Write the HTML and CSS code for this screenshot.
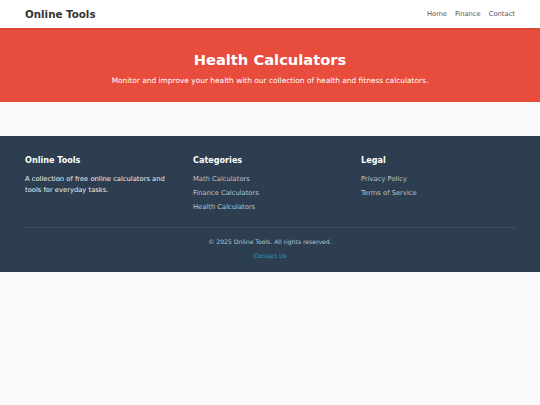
FILE: index.html
```html
<!DOCTYPE html>
<html lang="en">
<head>
<meta charset="utf-8">
<title>Health Calculators - Online Tools</title>
<link rel="stylesheet" href="styles.css">
</head>
<body>
<header class="site-header">
  <div class="container header-inner">
    <a class="logo" href="#">Online Tools</a>
    <nav class="main-nav">
      <a href="#">Home</a>
      <a href="#">Finance</a>
      <a href="#">Contact</a>
    </nav>
  </div>
</header>
<section class="hero">
  <h1>Health Calculators</h1>
  <p>Monitor and improve your health with our collection of health and fitness calculators.</p>
</section>
<main class="content"></main>
<footer class="site-footer">
  <div class="container">
    <div class="footer-grid">
      <div class="footer-col">
        <h3>Online Tools</h3>
        <p>A collection of free online calculators and tools for everyday tasks.</p>
      </div>
      <div class="footer-col">
        <h3>Categories</h3>
        <ul>
          <li><a href="#">Math Calculators</a></li>
          <li><a href="#">Finance Calculators</a></li>
          <li><a href="#">Health Calculators</a></li>
        </ul>
      </div>
      <div class="footer-col">
        <h3>Legal</h3>
        <ul>
          <li><a href="#">Privacy Policy</a></li>
          <li><a href="#">Terms of Service</a></li>
        </ul>
      </div>
    </div>
    <div class="footer-bottom">
      <p>&copy; 2025 Online Tools. All rights reserved.</p>
      <p><a href="#" class="contact-link">Contact Us</a></p>
    </div>
  </div>
</footer>
</body>
</html>
```
FILE: styles.css
```css
* { box-sizing: border-box; }
html, body { margin: 0; padding: 0; }
body {
  font-family: "DejaVu Sans", Verdana, sans-serif;
  font-size: 6.75px;
  line-height: 1.6;
  color: #333;
  background: #f8f9fa;
}
a { text-decoration: none; color: inherit; }
.container { padding: 0 25px; }

.site-header {
  background: #fff;
  box-shadow: 0 1px 3px rgba(0,0,0,0.12);
  position: relative;
  z-index: 1;
}
.header-inner {
  display: flex;
  justify-content: space-between;
  align-items: center;
  height: 28px;
}
.logo {
  font-size: 10.3px;
  font-weight: bold;
  color: #333;
}
.main-nav { display: flex; gap: 8px; }
.main-nav a { color: #555; font-size: 6.75px; }

.hero {
  background: #e74c3c;
  color: #fff;
  text-align: center;
  padding: 22.5px 25px 15.5px;
}
.hero h1 {
  margin: 0 0 6.75px;
  font-size: 14.7px;
  line-height: 1.2;
  font-weight: bold;
}
.hero p {
  margin: 0;
  font-size: 7.43px;
  line-height: 1.6;
}

.content { height: 34px; }

.site-footer {
  background: #2c3e50;
  color: #ecf0f1;
  padding: 20px 0 12px;
}
.footer-grid {
  display: grid;
  grid-template-columns: repeat(3, 1fr);
  column-gap: 14px;
  margin-bottom: 11px;
}
.footer-col h3 {
  margin: 0 0 8px;
  font-size: 8.1px;
  line-height: 1.2;
  color: #fff;
}
.footer-col p { margin: 0; }
.footer-col ul { list-style: none; margin: 0; padding: 0; }
.footer-col li { margin-bottom: 3.2px; }
.footer-col li a { color: #bdc3c7; }
.footer-bottom {
  border-top: 1px solid #3d5166;
  padding-top: 9px;
  text-align: center;
  font-size: 6.08px;
  color: #bdc3c7;
}
.footer-bottom p { margin: 0 0 4px; }
.footer-bottom p:last-child { margin: 0; }
.contact-link { color: #3498db; }
```
